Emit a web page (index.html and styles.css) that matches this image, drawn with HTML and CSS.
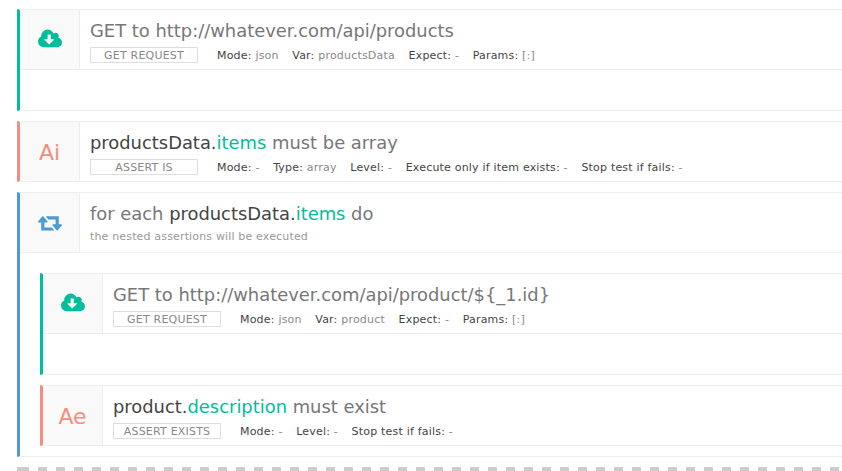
FILE: index.html
```html
<!DOCTYPE html>
<html>
<head>
<meta charset="utf-8">
<title>Test steps</title>
<link rel="stylesheet" href="styles.css">
</head>
<body>
<main class="list">
  <section class="step step-get tall">
    <header class="head">
      <div class="glyph"><svg class="ic" viewBox="0 0 1920 1792"><path d="M1280 928q0-14-9-23t-23-9h-224v-352q0-13-9.5-22.5t-22.5-9.5h-192q-13 0-22.5 9.5t-9.5 22.5v352h-224q-13 0-22.5 9.5t-9.5 22.5q0 14 9 23l352 352q9 9 23 9t23-9l351-351q10-12 10-24zm640 224q0 159-112.5 271.5t-271.5 112.5h-1088q-185 0-316.5-131.5t-131.5-316.5q0-130 70-240t188-165q-2-30-2-43 0-212 150-362t362-150q156 0 285.5 87t188.5 231q71-62 166-62 106 0 181 75t75 181q0 76-41 138 130 31 213.5 135.5t83.5 238.5z"/></svg></div>
      <div class="body">
        <h2 class="title">GET to http://whatever.com/api/products</h2>
        <div class="meta"><span class="tag">GET REQUEST</span><span class="kv">Mode: <i>json</i></span><span class="kv">Var: <i>productsData</i></span><span class="kv">Expect: <i>-</i></span><span class="kv">Params: <i>[:]</i></span></div>
      </div>
    </header>
  </section>

  <section class="step step-assert">
    <header class="head">
      <div class="glyph letters">Ai</div>
      <div class="body">
        <h2 class="title"><b>productsData.</b><em>items</em> must be array</h2>
        <div class="meta"><span class="tag">ASSERT IS</span><span class="kv">Mode: <i>-</i></span><span class="kv">Type: <i>array</i></span><span class="kv">Level: <i>-</i></span><span class="kv">Execute only if item exists: <i>-</i></span><span class="kv">Stop test if fails: <i>-</i></span></div>
      </div>
    </header>
  </section>

  <section class="step step-loop">
    <header class="head">
      <div class="glyph"><svg class="ic" viewBox="0 0 1920 1792"><path d="M1280 1376q0 13-9.5 22.5t-22.5 9.5h-960q-8 0-13.5-2t-9-7-5.5-8-3-11.5-1-11.5v-600h-192q-26 0-45-19t-19-45q0-24 15-41l320-384q19-22 49-22t49 22l320 384q15 17 15 41 0 26-19 45t-45 19h-192v384h576q16 0 25 11l160 192q7 10 7 21zm640-416q0 24-15 41l-320 384q-20 23-49 23t-49-23l-320-384q-15-17-15-41 0-26 19-45t45-19h192v-384h-576q-16 0-25-12l-160-192q-7-9-7-20 0-13 9.5-22.5t22.5-9.5h960q8 0 13.5 2t9 7 5.5 8.5 3 11.5 1 11.5v600h192q26 0 45 19t19 45z"/></svg></div>
      <div class="body">
        <h2 class="title">for each <b>productsData.</b><em>items</em> do</h2>
        <p class="note">the nested assertions will be executed</p>
      </div>
    </header>
    <div class="nested">
      <section class="step step-get tall">
        <header class="head">
          <div class="glyph"><svg class="ic" viewBox="0 0 1920 1792"><path d="M1280 928q0-14-9-23t-23-9h-224v-352q0-13-9.5-22.5t-22.5-9.5h-192q-13 0-22.5 9.5t-9.5 22.5v352h-224q-13 0-22.5 9.5t-9.5 22.5q0 14 9 23l352 352q9 9 23 9t23-9l351-351q10-12 10-24zm640 224q0 159-112.5 271.5t-271.5 112.5h-1088q-185 0-316.5-131.5t-131.5-316.5q0-130 70-240t188-165q-2-30-2-43 0-212 150-362t362-150q156 0 285.5 87t188.5 231q71-62 166-62 106 0 181 75t75 181q0 76-41 138 130 31 213.5 135.5t83.5 238.5z"/></svg></div>
          <div class="body">
            <h2 class="title">GET to http://whatever.com/api/product/${_1.id}</h2>
            <div class="meta"><span class="tag">GET REQUEST</span><span class="kv">Mode: <i>json</i></span><span class="kv">Var: <i>product</i></span><span class="kv">Expect: <i>-</i></span><span class="kv">Params: <i>[:]</i></span></div>
          </div>
        </header>
      </section>
      <section class="step step-assert">
        <header class="head">
          <div class="glyph letters">Ae</div>
          <div class="body">
            <h2 class="title"><b>product.</b><em>description</em> must exist</h2>
            <div class="meta"><span class="tag">ASSERT EXISTS</span><span class="kv">Mode: <i>-</i></span><span class="kv">Level: <i>-</i></span><span class="kv">Stop test if fails: <i>-</i></span></div>
          </div>
        </header>
      </section>
    </div>
  </section>
  <div class="dropzone"></div>
</main>
</body>
</html>
```

FILE: styles.css
```css
html, body {
  margin: 0;
  height: 471px;
  overflow: hidden;
  background: #fff;
}
body {
  font-family: "DejaVu Sans", sans-serif;
  color: #777;
}
.list {
  padding: 9px 0 0 17px;
  display: flex;
  flex-direction: column;
  gap: 10px;
}
.step {
  border-left: 3px solid #ccc;
  border-top: 1px solid #eee;
  border-bottom: 1px solid #eee;
}
.step-get { border-left-color: #00bd9b; }
.step-assert { border-left-color: #f38e7e; }
.step-loop { border-left-color: #4e9bd1; }
.tall { height: 100px; }
.head {
  display: flex;
  height: 59px;
  border-bottom: 1px solid #eee;
}
.step-assert > .head { border-bottom: 0; }
.glyph {
  width: 59px;
  flex: none;
  border-right: 1px solid #eee;
  background: #f9f9f9;
  display: flex;
  align-items: center;
  justify-content: center;
  font-size: 22px;
  color: #f38e7e;
}
.letters { padding-top: 2px; }
.ic { width: 24px; height: 22.4px; fill: #00bd9b; }
.step-loop > .head .ic { fill: #4e9bd1; margin-top: 3px; }
.body { padding-left: 10px; min-width: 0; }
.title {
  margin: 10px 0 0;
  font-size: 17.9px;
  line-height: 22px;
  font-weight: 400;
  color: #777;
  white-space: nowrap;
}
.title b { font-weight: 400; color: #444; }
.title em { font-style: normal; color: #00bd9b; }
.meta {
  display: flex;
  align-items: center;
  margin-top: 5px;
  font-size: 11px;
  letter-spacing: 0.2px;
  color: #444;
  white-space: nowrap;
}
.tag {
  box-sizing: border-box;
  width: 108px;
  height: 16px;
  line-height: 15px;
  border: 1px solid #ddd;
  text-align: center;
  color: #888;
  margin-right: 19px;
}
.kv { margin-right: 13.6px; }
.kv i { font-style: normal; color: #888; }
.note {
  margin: 5px 0 0;
  font-size: 11px;
  letter-spacing: 0.16px;
  line-height: 14px;
  color: #999;
}
.nested {
  display: flex;
  flex-direction: column;
  gap: 10px;
  padding: 20px 0 0 20px;
  height: 183px;
}
.dropzone {
  height: 4px;
  border-left: 3px solid #ccc;
  background: repeating-linear-gradient(to right, #ccc 0 9px, transparent 9px 18px);
}
```
